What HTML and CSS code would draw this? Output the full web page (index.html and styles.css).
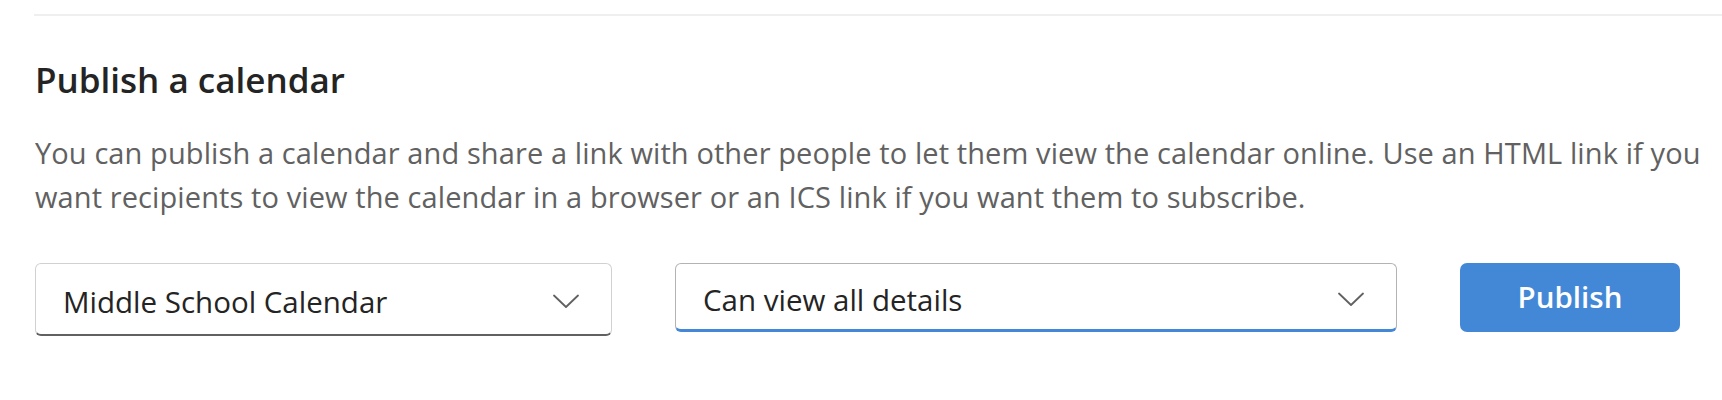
FILE: index.html
```html
<!DOCTYPE html>
<html lang="en">
<head>
<meta charset="utf-8">
<title>Publish a calendar</title>
<link rel="stylesheet" href="styles.css">
</head>
<body>
<div class="page">
  <div class="divider"></div>
  <section class="publish">
    <h2 class="title">Publish a calendar</h2>
    <p class="desc">You can publish a calendar and share a link with other people to let them view the calendar online. Use an HTML link if you want recipients to view the calendar in a browser or an ICS link if you want them to subscribe.</p>
    <div class="controls">
      <div class="dropdown dropdown-calendar">
        <span class="dropdown-text">Middle School Calendar</span>
        <svg class="chevron" width="26" height="15" viewBox="0 0 26 15"><path d="M1 1.5 L13 13 L25 1.5" fill="none" stroke="#616161" stroke-width="1.8" stroke-linecap="round" stroke-linejoin="round"/></svg>
      </div>
      <div class="dropdown dropdown-perm">
        <span class="dropdown-text">Can view all details</span>
        <svg class="chevron" width="26" height="15" viewBox="0 0 26 15"><path d="M1 1.5 L13 13 L25 1.5" fill="none" stroke="#616161" stroke-width="1.8" stroke-linecap="round" stroke-linejoin="round"/></svg>
      </div>
      <button class="publish-btn">Publish</button>
    </div>
  </section>
</div>
</body>
</html>
```
FILE: styles.css
```css
* { box-sizing: border-box; }
html, body { margin: 0; padding: 0; background: #ffffff; }
body {
  font-family: "Open Sans", "Noto Sans", "DejaVu Sans", sans-serif;
  color: #242424;
}
.page {
  padding-left: 34px;
  padding-top: 14px;
}
.divider {
  height: 2px;
  background: #efefef;
}
.publish {
  padding-left: 1px;
  padding-top: 42px;
}
.title {
  margin: 0;
  font-size: 35px;
  font-weight: 600;
  line-height: 44px;
  color: #242424;
}
.desc {
  margin: 29px 0 0 0;
  width: 1686px;
  font-size: 29px;
  letter-spacing: 0.1px;
  line-height: 44px;
  color: #616161;
}
.controls {
  margin-top: 44px;
  display: flex;
  align-items: flex-start;
  gap: 63px;
}
.dropdown {
  display: flex;
  align-items: center;
  justify-content: space-between;
  padding: 0 32px 0 27px;
  background: #ffffff;
  border-radius: 6px;
}
.dropdown-calendar {
  width: 577px;
  height: 73px;
  border: 1px solid #d1d1d1;
  border-bottom: 2px solid #616161;
  padding-top: 4px;
}
.dropdown-perm {
  width: 722px;
  height: 69px;
  border: 1px solid #b3b3b3;
  border-bottom: 3px solid #4388d6;
  padding-top: 6px;
}
.dropdown-text {
  font-size: 29.5px;
  color: #242424;
}
.chevron { display: block; flex: none; }
.publish-btn {
  width: 220px;
  height: 69px;
  border: none;
  border-radius: 7px;
  background: #4388d6;
  color: #ffffff;
  font-family: inherit;
  font-size: 29.5px;
  font-weight: 600;
  padding: 0 0 2px 0;
}
```
